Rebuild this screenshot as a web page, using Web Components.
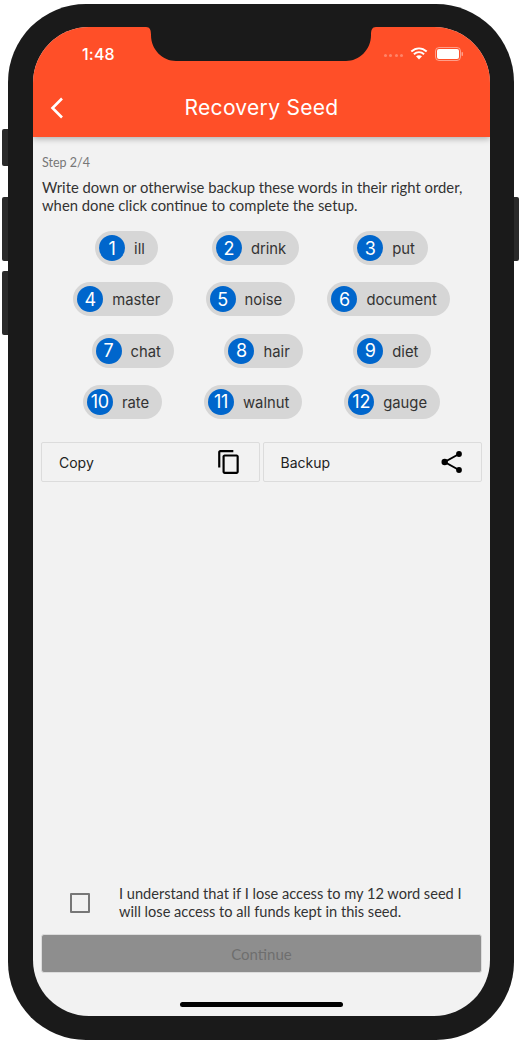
<!DOCTYPE html>
<html>
<head>
<meta charset="utf-8">
<title>Recovery Seed</title>
<style>
    html, body { margin: 0; padding: 0; background: #fff; }
    body { width: 523px; height: 1042px; overflow: hidden; }
</style>
</head>
<body>
<phone-frame>
    <app-header title="Recovery Seed" time="1:48"></app-header>
    <setup-page>
        <seed-grid>
            <seed-row>
                <seed-chip num="1">ill</seed-chip>
                <seed-chip num="2">drink</seed-chip>
                <seed-chip num="3">put</seed-chip>
            </seed-row>
            <seed-row>
                <seed-chip num="4">master</seed-chip>
                <seed-chip num="5">noise</seed-chip>
                <seed-chip num="6">document</seed-chip>
            </seed-row>
            <seed-row>
                <seed-chip num="7">chat</seed-chip>
                <seed-chip num="8">hair</seed-chip>
                <seed-chip num="9">diet</seed-chip>
            </seed-row>
            <seed-row>
                <seed-chip num="10">rate</seed-chip>
                <seed-chip num="11">walnut</seed-chip>
                <seed-chip num="12">gauge</seed-chip>
            </seed-row>
        </seed-grid>
        <div slot="actions" style="display:flex;gap:3px">
            <action-button icon="copy">Copy</action-button>
            <action-button icon="share">Backup</action-button>
        </div>
        <ack-check slot="ack">I understand that if I lose access to my 12 word seed I will lose access to all funds kept in this seed.</ack-check>
        <continue-button slot="continue">Continue</continue-button>
    </setup-page>
</phone-frame>

<script>
class PhoneFrame extends HTMLElement {
    constructor() {
        super();
        this.attachShadow({mode: 'open'});
    }

    connectedCallback() {
        this.shadowRoot.innerHTML = `<style>
            :host {
                display: block;
                position: relative;
                box-sizing: border-box;
                width: 506px;
                height: 1036px;
                margin: 4px 0 0 8px;
                padding: 23px 24px 24px 25px;
                background: #1a1a1a;
                border-radius: 78px;
            }
            .screen {
                position: relative;
                display: flex;
                flex-direction: column;
                height: 100%;
                background: #f2f2f2;
                border-radius: 56px;
                overflow: hidden;
            }
            .notch { position: absolute; z-index: 2; top: 0; left: 113px; width: 230px; height: 34px; }
            .home {
                position: absolute;
                left: 147px;
                bottom: 9px;
                width: 163px;
                height: 5px;
                border-radius: 3px;
                background: #000;
            }
            .side { position: absolute; background: #2a2a2a; width: 6px; }
            .left { left: -6px; border-radius: 2px 0 0 2px; }
            .right { right: -5px; width: 5px; border-radius: 0 2px 2px 0; }
        </style>
        <i class="side left" style="top:125px;height:37px"></i>
        <i class="side left" style="top:193px;height:64px"></i>
        <i class="side left" style="top:267px;height:64px"></i>
        <i class="side right" style="top:193px;height:64px"></i>
        <div class="screen">
            <slot></slot>
            <svg class="notch" viewBox="0 0 230 34">
                <path fill="#1a1a1a" d="M0 0H230C226 0 225 3 225 8C225 23 213 34 200 34H30C17 34 5 23 5 8C5 3 4 0 0 0Z"/>
            </svg>
            <div class="home"></div>
        </div>`;
    }
}

class AppHeader extends HTMLElement {
    constructor() {
        super();
        this.attachShadow({mode: 'open'});
    }

    connectedCallback() {
        this.shadowRoot.innerHTML = `<style>
            :host {
                display: block;
                position: relative;
                z-index: 1;
                flex: none;
                height: 110px;
                background: #ff4f28;
                color: #fff;
                font-family: Inter, "Liberation Sans", sans-serif;
                box-shadow: 0 2px 6px rgba(0,0,0,.28);
            }
            .status {
                display: flex;
                align-items: center;
                height: 53px;
                padding: 0 27px 0 49px;
            }
            .time { font-size: 16px; font-weight: 500; letter-spacing: .2px; }
            .right { margin-left: auto; display: flex; align-items: center; gap: 7px; }
            .dots { display: flex; gap: 2.500px; margin-top: 3px; }
            .dots i { width: 3px; height: 3px; border-radius: 50%; background: rgba(255,255,255,.3); }
            .bar {
                display: flex;
                align-items: center;
                justify-content: center;
                position: relative;
                height: 54px;
            }
            .title { font-size: 21px; font-weight: 400; letter-spacing: .3px; }
            .back { position: absolute; left: 17px; top: 17px; }
        </style>
        <div class="status">
            <span class="time">${this.getAttribute('time')}</span>
            <div class="right">
                <span class="dots"><i></i><i></i><i></i><i></i></span>
                <svg width="18" height="13" viewBox="0 0 18 13">
                    <path fill="none" stroke="#fff" stroke-width="2" d="M1.300 4.600C6 .4 12 .4 16.700 4.600M3.900 7.200C6.900 4.700 11.100 4.700 14.100 7.200"/>
                    <path fill="#fff" d="M9 12.600 6 9.300C7.800 8 10.200 8 12 9.300Z"/>
                </svg>
                <svg width="28" height="14" viewBox="0 0 28 14">
                    <rect x=".5" y=".5" width="25" height="13" rx="3.500" fill="none" stroke="#fff" stroke-opacity=".45"/>
                    <rect x="2" y="2" width="22" height="10" rx="2" fill="#fff"/>
                    <rect x="26.500" y="5" width="1.500" height="4" rx=".7" fill="#fff" fill-opacity=".45"/>
                </svg>
            </div>
        </div>
        <div class="bar">
            <svg class="back" width="14" height="22" viewBox="0 0 14 22">
                <path fill="none" stroke="#fff" stroke-width="2.600" d="M12 1.500 2.500 11 12 20.500"/>
            </svg>
            <span class="title">${this.getAttribute('title')}</span>
        </div>`;
    }
}

class SetupPage extends HTMLElement {
    constructor() {
        super();
        this.attachShadow({mode: 'open'});
    }

    connectedCallback() {
        this.shadowRoot.innerHTML = `<style>
            :host {
                display: flex;
                flex-direction: column;
                flex: 1;
                min-height: 0;
                padding: 18px 8px 43px;
                font-family: Lato, "Liberation Sans", sans-serif;
                color: #333;
            }
            .step { font-size: 12.500px; line-height: 16px; color: #777; padding-left: 1px; }
            .intro { font-size: 14.800px; line-height: 18px; margin: 7px 0 0; padding-left: 1px; }
            .spacer { flex: 1; }
        </style>
        <div class="step">Step 2/4</div>
        <p class="intro">Write down or otherwise backup these words in their right order, when done click continue to complete the setup.</p>
        <slot></slot>
        <slot name="actions"></slot>
        <div class="spacer"></div>
        <slot name="ack"></slot>
        <slot name="continue"></slot>`;
    }
}

class SeedGrid extends HTMLElement {
    constructor() {
        super();
        this.attachShadow({mode: 'open'});
        this.shadowRoot.innerHTML = `<style>
            :host { display: flex; flex-direction: column; gap: 17.300px; margin: 17px 0 23px; }
        </style><slot></slot>`;
    }
}

class SeedRow extends HTMLElement {
    constructor() {
        super();
        this.attachShadow({mode: 'open'});
        this.shadowRoot.innerHTML = `<style>
            :host { display: flex; justify-content: space-evenly; }
        </style><slot></slot>`;
    }
}

class SeedChip extends HTMLElement {
    constructor() {
        super();
        this.attachShadow({mode: 'open'});
    }

    connectedCallback() {
        this.shadowRoot.innerHTML = `<style>
            :host {
                display: flex;
                align-items: center;
                gap: 9px;
                height: 34px;
                padding: 0 13px 0 4px;
                border-radius: 17px;
                background: #d6d6d6;
                font-family: Inter, "Liberation Sans", sans-serif;
                font-size: 14.800px;
                color: #333;
            }
            .num {
                display: flex;
                align-items: center;
                justify-content: center;
                width: 26px;
                height: 26px;
                border-radius: 50%;
                background: #0066cc;
                color: #fff;
                font-size: 18px;
                letter-spacing: -.3px;
            }
            .word { margin-top: 2px; }
        </style>
        <span class="num">${this.getAttribute('num')}</span><span class="word"><slot></slot></span>`;
    }
}

const ICONS = {
    copy: `<svg width="26" height="26" viewBox="0 0 24 24"><path fill="#000" d="M16 1H4c-1.100 0-2 .9-2 2v14h2V3h12V1zm3 4H8c-1.100 0-2 .9-2 2v14c0 1.100.9 2 2 2h11c1.100 0 2-.9 2-2V7c0-1.100-.9-2-2-2zm0 16H8V7h11v14z"/></svg>`,
    share: `<svg width="22" height="26" viewBox="0 0 22 26"><g fill="#000"><circle cx="3.700" cy="13" r="3.200"/><circle cx="18" cy="5" r="2.900"/><circle cx="18" cy="21" r="2.900"/></g><path fill="none" stroke="#000" stroke-width="2" d="M18 5 3.700 13 18 21"/></svg>`
};

class ActionButton extends HTMLElement {
    constructor() {
        super();
        this.attachShadow({mode: 'open'});
    }

    connectedCallback() {
        const right = this.getAttribute('icon') === 'share' ? 18 : 17;
        this.shadowRoot.innerHTML = `<style>
            :host {
                display: flex;
                flex: 1;
                align-items: center;
                justify-content: space-between;
                box-sizing: border-box;
                height: 40px;
                padding: 0 ${right}px 0 17px;
                border: 1px solid #dcdcdc;
                border-radius: 2px;
                font-family: Inter, "Liberation Sans", sans-serif;
                font-size: 14px;
                color: #222;
            }
            .label { margin-top: 2px; }
            svg { display: block; }
        </style>
        <span class="label"><slot></slot></span>${ICONS[this.getAttribute('icon')]}`;
    }
}

class AckCheck extends HTMLElement {
    constructor() {
        super();
        this.attachShadow({mode: 'open'});
    }

    connectedCallback() {
        this.shadowRoot.innerHTML = `<style>
            :host {
                display: flex;
                align-items: center;
                margin-bottom: 13px;
                font-size: 14.600px;
                line-height: 18px;
                color: #333;
            }
            .box {
                flex: none;
                box-sizing: border-box;
                width: 20px;
                height: 20px;
                margin: 0 29px 0 29px;
                border: 2.500px solid #777;
                border-radius: 1px;
            }
        </style>
        <span class="box"></span><span><slot></slot></span>`;
    }
}

class ContinueButton extends HTMLElement {
    constructor() {
        super();
        this.attachShadow({mode: 'open'});
    }

    connectedCallback() {
        this.shadowRoot.innerHTML = `<style>
            :host {
                display: flex;
                align-items: center;
                justify-content: center;
                box-sizing: border-box;
                height: 39px;
                background: #8e8e8e;
                border: 1px solid #dcdcdc;
                border-radius: 3px;
                font-size: 15px;
                color: #6e6e6e;
            }
        </style><slot></slot>`;
    }
}

customElements.define('phone-frame', PhoneFrame);
customElements.define('app-header', AppHeader);
customElements.define('setup-page', SetupPage);
customElements.define('seed-grid', SeedGrid);
customElements.define('seed-row', SeedRow);
customElements.define('seed-chip', SeedChip);
customElements.define('action-button', ActionButton);
customElements.define('ack-check', AckCheck);
customElements.define('continue-button', ContinueButton);
</script>
</body>
</html>
